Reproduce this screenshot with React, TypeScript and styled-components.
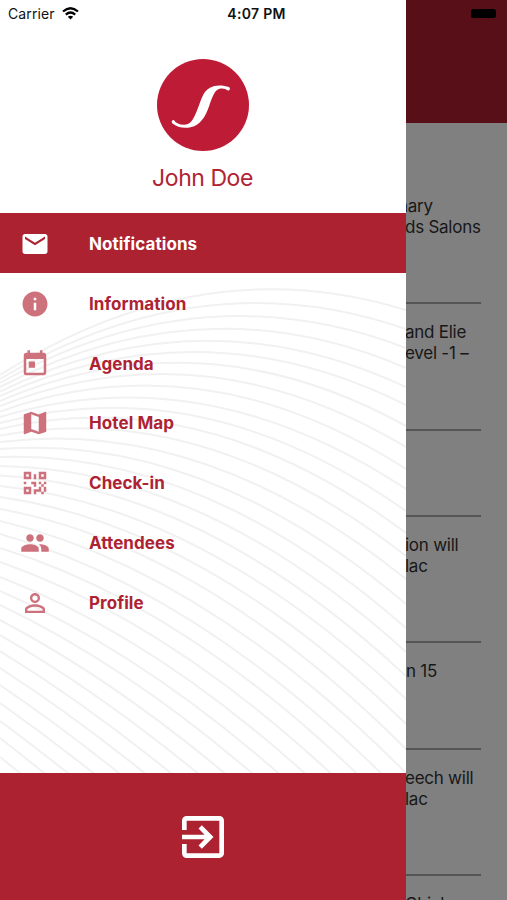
import React from 'react';
import styled, { createGlobalStyle } from 'styled-components';
import { MdEmail, MdInfo, MdMap, MdPeople, MdPersonOutline, MdToday, MdExitToApp } from 'react-icons/md';

const Global = createGlobalStyle`
  * { box-sizing: border-box; }
  body { margin: 0; font-family: Inter, "Liberation Sans", sans-serif; }
`;

const Screen = styled.div`
  position: relative;
  width: 507px;
  height: 900px;
  overflow: hidden;
  background: #808080;
`;

const Page = styled.main`
  height: 900px;
  overflow: hidden;
`;

const PageHeader = styled.header`
  height: 123px;
  background: #580f18;
`;

const Feed = styled.div`
  display: flex;
  flex-direction: column;
  padding: 55px 26px 0 0;
`;

const Entry = styled.article<{ $height: number }>`
  flex: none;
  height: ${(p) => p.$height}px;
  padding: 18px 0 0 405px;
  border-bottom: 2px solid #555;
  font-size: 17px;
  line-height: 21px;
  letter-spacing: -0.25px;
  color: #171717;
  white-space: nowrap;
`;

const Line = styled.div<{ $pull: number }>`
  margin-left: ${(p) => -p.$pull}px;
`;

const Drawer = styled.aside`
  position: absolute;
  inset: 0 auto 0 0;
  width: 406px;
  display: flex;
  flex-direction: column;
  background: #fff;
  overflow: hidden;
`;

const Profile = styled.section`
  height: 213px;
  padding-top: 59px;
  display: flex;
  flex-direction: column;
  align-items: center;
`;

const UserName = styled.div`
  margin-top: 12px;
  padding-right: 1px;
  font-size: 23px;
  line-height: 30px;
  letter-spacing: -0.45px;
  color: #b02435;
`;

const Menu = styled.nav`
  position: relative;
  height: 560px;
  isolation: isolate;
`;

const Waves = styled.svg`
  position: absolute;
  left: 0;
  top: 60px;
  z-index: -1;
`;

const MenuItem = styled.div<{ $active?: boolean }>`
  height: ${(p) => (p.$active ? 60 : 59.8)}px;
  padding: 2px 0 0 20px;
  display: flex;
  align-items: center;
  gap: 39px;
  font-size: 17px;
  font-weight: 700;
  letter-spacing: 0.08px;
  color: ${(p) => (p.$active ? '#fff' : '#ad2333')};
  background: ${(p) => (p.$active ? '#ad2231' : 'transparent')};
  svg {
    width: 30px;
    height: 30px;
    flex: none;
    color: ${(p) => (p.$active ? '#fff' : '#cd717c')};
  }
`;

const Footer = styled.footer`
  flex: 1;
  display: flex;
  align-items: center;
  justify-content: center;
  background: #ad2231;
  color: #fff;
`;

const StatusBar = styled.div`
  position: absolute;
  inset: 0 0 auto 0;
  height: 27px;
  padding: 0 11px 0 8px;
  display: grid;
  grid-template-columns: 1fr auto 1fr;
  align-items: center;
  font-size: 14px;
  color: #111;
`;

const Carrier = styled.div`
  display: flex;
  align-items: center;
  gap: 7px;
  letter-spacing: 0.12px;
`;

const Clock = styled.div`
  font-weight: 600;
  font-size: 14px;
  letter-spacing: 0.3px;
  padding-left: 9px;
`;

const Battery = styled.div`
  justify-self: end;
  width: 25px;
  height: 9px;
  border-radius: 2.5px;
  background: #000;
`;

const QrIcon = () => (
  <svg viewBox="0 0 24 24" fill="currentColor">
    <path d="M3,11H5V13H3V11M11,5H13V9H11V5M9,11H13V15H11V13H9V11M15,11H17V13H19V11H21V13H19V15H21V19H19V21H17V19H13V21H11V17H15V15H17V13H15V11M19,19V15H17V19H19M15,3H21V9H15V3M17,5V7H19V5H17M3,3H9V9H3V3M5,5V7H7V5H5M3,15H9V21H3V15M5,17V19H7V17H5Z" />
  </svg>
);

// Heights of each wave at the left edge, at x = 190 and at the right edge.
const leftY = [
  375, 379, 383, 387, 391.5, 396, 401, 406, 411.5, 417, 423, 429, 435.5, 442, 449, 457, 466, 475.5,
  486, 497, 509, 521, 534, 548, 562, 577, 591, 605, 620, 635, 651, 668, 685, 703, 721, 738, 757,
];
const middleY = [
  297, 308, 319, 330, 341, 352, 363, 375, 388, 402, 415, 428, 443, 459, 475, 491, 508, 525, 543, 561,
  580, 600, 620, 639, 660, 681, 702, 723, 745, 767, 789, 811, 833, 855, 878, 901, 924,
];
const rightY = [
  310, 329, 348, 368, 387, 405, 426, 447, 469, 489, 511, 533, 556, 579, 604, 628, 652, 676, 699, 724,
  749, 773,
];
const MID_X = 190;
const WIDTH = 406;

const waves = leftY.map((l, i) => {
  const m = middleY[i];
  const r = rightY[i] ?? 773 + (i - 21) * 25;
  const curve = ((r - l) / WIDTH - (m - l) / MID_X) / (WIDTH - MID_X);
  const slope = (m - l) / MID_X - curve * MID_X;
  const control = l + (slope * WIDTH) / 2;
  return `M0 ${l} Q${WIDTH / 2} ${control.toFixed(1)} ${WIDTH} ${r}`;
});

const items = [
  { label: 'Notifications', Icon: MdEmail },
  { label: 'Information', Icon: MdInfo },
  { label: 'Agenda', Icon: MdToday },
  { label: 'Hotel Map', Icon: MdMap },
  { label: 'Check-in', Icon: QrIcon },
  { label: 'Attendees', Icon: MdPeople },
  { label: 'Profile', Icon: MdPersonOutline },
];

const entries = [
  { height: 126, lines: [{ text: 'nary', pull: 7 }, { text: 'ds Salons', pull: 0 }] },
  { height: 127, lines: [{ text: 'and Elie', pull: 0 }, { text: 'evel -1 –', pull: 0 }] },
  { height: 86, lines: [] },
  { height: 126, lines: [{ text: 'ion will', pull: 0 }, { text: 'lac', pull: 0 }] },
  { height: 107, lines: [{ text: 'n 15', pull: -1 }] },
  { height: 126, lines: [{ text: 'eech will', pull: 0 }, { text: 'lac', pull: 0 }] },
  { height: 127, lines: [{ text: 'Chial', pull: 0 }] },
];

export default function App() {
  return (
    <Screen>
      <Global />
      <Page>
        <PageHeader />
        <Feed>
          {entries.map((entry, i) => (
            <Entry key={i} $height={entry.height}>
              {entry.lines.map((line) => (
                <Line key={line.text} $pull={line.pull}>{line.text}</Line>
              ))}
            </Entry>
          ))}
        </Feed>
      </Page>
      <Drawer>
        <Profile>
          <svg width="92" height="92" viewBox="0 0 92 92">
            <circle cx="46" cy="46" r="46" fill="#be1c36" />
            <path
              d="M72 28 C66 26 58 25.5 52.5 29 C45.5 33 44 42 40 51.5 C36 61.5 33 65.8 27 65.8 C22 65.8 19 64 17 61.2 C15 60 14 63 15.5 64.5 C20 68.3 27 69.8 33.5 68.3 C44 66 48.5 57 52 47.5 C55 38.5 57.5 31.5 62 30 C66 28.8 68 30 71 31.5 C73.2 31.8 73.4 29 72 28 Z"
              fill="#fff"
            />
          </svg>
          <UserName>John Doe</UserName>
        </Profile>
        <Menu>
          <Waves width="406" height="500" viewBox="0 273 406 500" fill="none" stroke="#f1f1f1" strokeWidth="2">
            {waves.map((d) => (
              <path key={d} d={d} />
            ))}
          </Waves>
          {items.map(({ label, Icon }, i) => (
            <MenuItem key={label} $active={i === 0}>
              <Icon />
              {label}
            </MenuItem>
          ))}
        </Menu>
        <Footer>
          <MdExitToApp size={56} />
        </Footer>
      </Drawer>
      <StatusBar>
        <Carrier>
          Carrier
          <svg width="17" height="13" viewBox="0 0 17 13" fill="none" stroke="#000" strokeWidth="2.3">
            <path d="M1 4.5 Q8.5 -2.1 16 4.5" />
            <path d="M3.8 7.6 Q8.5 3.5 13.2 7.6" />
            <path d="M8.5 12.5 L5.8 9.8 Q8.5 7.5 11.2 9.8 Z" fill="#000" stroke="none" />
          </svg>
        </Carrier>
        <Clock>4:07 PM</Clock>
        <Battery />
      </StatusBar>
    </Screen>
  );
}
